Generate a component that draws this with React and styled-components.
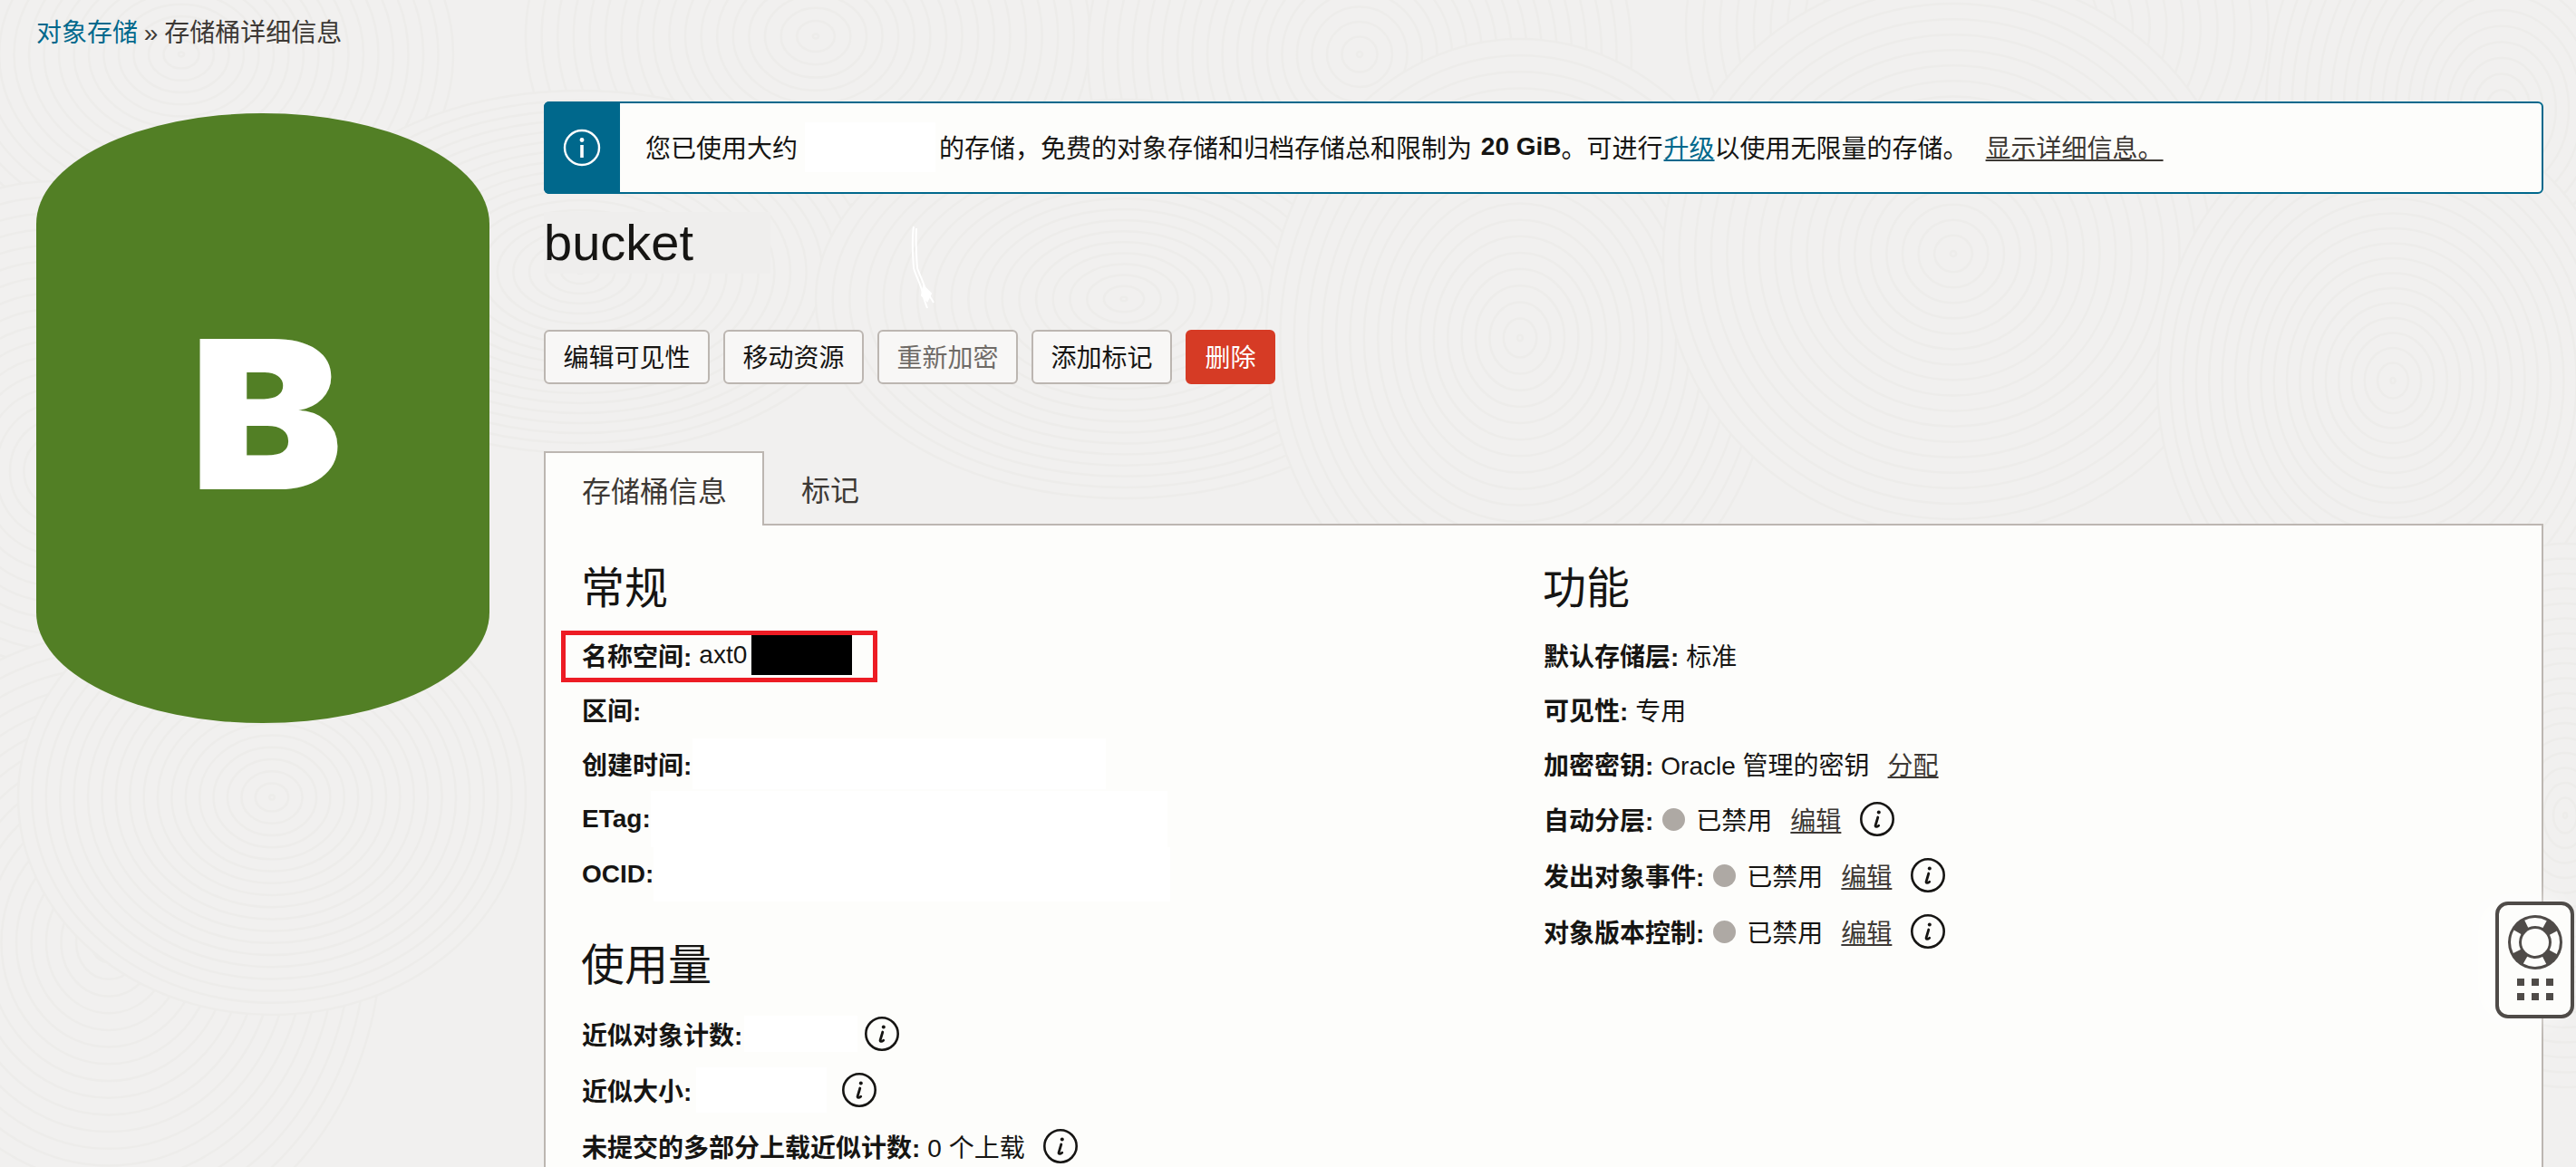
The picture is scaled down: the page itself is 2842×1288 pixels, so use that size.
import React from 'react';
import styled, { createGlobalStyle } from 'styled-components';

const GlobalStyle = createGlobalStyle`
  html, body {
    margin: 0;
    padding: 0;
    height: 1288px;
    overflow: hidden;
    background: #f1f0ef;
    font-family: "Liberation Sans", "Noto Sans CJK SC", sans-serif;
    color: #161513;
  }
`;

const Page = styled.div`
  position: relative;
  height: 1288px;
  overflow: hidden;
  padding: 0 36px 0 40px;
  box-sizing: border-box;
`;

const Backdrop = styled.svg`
  position: absolute;
  inset: 0;
`;

const Breadcrumb = styled.nav`
  position: relative;
  height: 74px;
  line-height: 74px;
  font-size: 28px;
  color: #3d3935;
  word-spacing: -1px;
`;

const Crumb = styled.a`
  color: #00688c;
`;

const Body = styled.div`
  position: relative;
  display: flex;
  gap: 60px;
`;

const Side = styled.div`
  flex: 0 0 500px;
  padding-top: 51px;
`;

const BucketShape = styled.div`
  width: 500px;
  height: 673px;
  background: #527f25;
  border-radius: 250px / 122px;
  display: flex;
  align-items: center;
  justify-content: center;
  padding-bottom: 9px;
  box-sizing: border-box;
`;

const BucketLetter = styled.span`
  margin-left: 6px;
  color: #fff;
  font-family: Inter, Roboto, "Liberation Sans", sans-serif;
  font-weight: 900;
  font-size: 226px;
  line-height: 1;
  -webkit-text-stroke: 2px #fff;
  transform: scaleX(1.107);
`;

const Main = styled.main`
  flex: 1;
  min-width: 0;
  padding-top: 38px;
`;

const Banner = styled.div`
  display: flex;
  height: 102px;
  box-sizing: border-box;
  border: 2px solid #00688c;
  border-radius: 6px;
  background: #fdfdfb;
  font-size: 28px;
`;

const BannerIcon = styled.div`
  flex: 0 0 84px;
  margin: -2px 0 -2px -2px;
  background: #00688c;
  border-radius: 6px 0 0 6px;
  display: flex;
  align-items: center;
  justify-content: center;
`;

const BannerText = styled.div`
  display: flex;
  align-items: center;
  padding: 0 0 2px 28px;
  white-space: pre;
`;

const BannerPatch = styled.span`
  display: inline-block;
  width: 144px;
  height: 55px;
  margin: 0 4px 0 8px;
  background: #fff;
`;

const Strong = styled.b`
  margin-left: 2px;
`;

const UpgradeLink = styled.a`
  margin-left: 1px;
  color: #00688c;
  text-decoration: underline;
`;

const DetailLink = styled.a`
  margin-left: 19px;
  color: #3d3935;
  text-decoration: underline;
`;

const TitleRow = styled.div`
  position: relative;
  margin-top: 20px;
  height: 68px;
`;

const Title = styled.h1`
  margin: 0;
  width: 250px;
  font-size: 56px;
  font-weight: 400;
  line-height: 68px;
  background: #efeeed;
`;

const Squiggle = styled.svg`
  position: absolute;
  left: 405px;
  top: 14px;
`;

const Toolbar = styled.div`
  display: flex;
  gap: 15px;
  margin-top: 62px;
`;

const Button = styled.button`
  height: 60px;
  padding: 0 19.5px 2px;
  border: 2px solid ${(p) => (p.$danger ? '#d63b25' : '#bcb6b1')};
  border-radius: 6px;
  background: ${(p) => (p.$danger ? '#d63b25' : '#f8f7f6')};
  color: ${(p) => (p.$danger ? '#fff' : p.disabled ? '#6f6b67' : '#161513')};
  font: inherit;
  font-size: 28px;
`;

const Tabs = styled.div`
  display: flex;
  margin-top: 74px;
  position: relative;
  z-index: 1;
  margin-bottom: -2px;
`;

const Tab = styled.div`
  width: 243px;
  height: 82px;
  box-sizing: border-box;
  font-size: 32px;
  color: #3d3935;
  display: flex;
  align-items: center;
  padding-left: ${(p) => (p.$active ? '40px' : '41px')};
  background: ${(p) => (p.$active ? '#fdfdfb' : 'transparent')};
  border: ${(p) => (p.$active ? '2px solid #bcb6b1' : 'none')};
  border-bottom: none;
`;

const Panel = styled.section`
  display: grid;
  grid-template-columns: 1061px 1fr;
  height: 760px;
  box-sizing: border-box;
  padding: 40px 0 0 40px;
  border: 2px solid #bcb6b1;
  background: #fdfdfb;
`;

const Heading = styled.h2`
  font-size: 48px;
  font-weight: 400;
  line-height: 60px;
  margin: ${(p) => (p.$second ? '41px 0 14px' : '0 0 13px')};
  margin-left: -1px;
`;

const Row = styled.div`
  position: relative;
  display: flex;
  align-items: center;
  height: ${(p) => (p.$tall ? '62px' : '60px')};
  font-size: 28px;
  white-space: nowrap;
`;

const Label = styled.b`
  font-weight: 700;
`;

const Value = styled.span`
  margin-left: 8px;
`;

const Patch = styled.span`
  display: block;
  height: ${(p) => p.$h || 56}px;
  width: ${(p) => p.$w}px;
  background: #fff;
  margin-left: ${(p) => p.$left || 0}px;
`;

const Censor = styled.span`
  display: block;
  width: 111px;
  height: 44px;
  margin-left: 5px;
  background: #000;
`;

const Callout = styled.div`
  position: absolute;
  left: -23px;
  top: 3px;
  width: 349px;
  height: 57px;
  box-sizing: border-box;
  border: 5px solid #ed1c24;
`;

const Dot = styled.span`
  width: 25px;
  height: 25px;
  margin: 0 12px 0 10px;
  border-radius: 50%;
  background: #aea9a4;
`;

const EditLink = styled.a`
  margin-left: 20px;
  color: #3d3935;
  text-decoration: underline;
`;

const HintIcon = styled.svg`
  flex: none;
  margin-left: ${(p) => p.$gap || 21}px;
`;

const HelpWidget = styled.aside`
  position: absolute;
  left: 2753px;
  top: 995px;
  width: 87px;
  height: 129px;
  box-sizing: border-box;
  border: 4px solid #4f4b48;
  border-radius: 14px;
  background: #fdfdfb;
  box-shadow: -18px 0 30px rgba(255, 255, 255, 0.7);
  display: flex;
  flex-direction: column;
  align-items: center;
  padding-top: 10px;
`;

const Dots = styled.div`
  display: grid;
  grid-template-columns: repeat(3, 8px);
  gap: 8px;
  margin-top: 9px;
  span {
    height: 8px;
    background: #4f4b48;
  }
`;

// wood grain behind the page, later groups paint over earlier ones
const grain = [
  [200, 60, 300, 240], [900, 40, 320, 260], [1500, 60, 300, 300], [2200, 30, 340, 280], [2760, 120, 260, 320],
  [60, 520, 280, 320], [640, 300, 320, 200], [1240, 330, 340, 220], [1677, 373, 280, 330], [2155, 280, 320, 310],
  [2640, 420, 260, 300], [120, 1040, 300, 340], [300, 880, 280, 240], [2830, 900, 200, 300],
];

function Grain() {
  return (
    <Backdrop width="2842" height="1288" viewBox="0 0 2842 1288" fill="none">
      {grain.map(([cx, cy, rx, ry]) => {
        const rings = [];
        for (let i = 0; i < 1; i += 0.055) {
          rings.push(<ellipse key={i} cx={cx} cy={cy} rx={rx * (1 - i)} ry={ry * (1 - i)} stroke="#edecea" strokeWidth="2.5" />);
        }
        return (
          <g key={cx + '-' + cy}>
            <ellipse cx={cx} cy={cy} rx={rx} ry={ry} fill="#f1f0ef" />
            {rings}
          </g>
        );
      })}
    </Backdrop>
  );
}

function Hint({ gap }) {
  return (
    <HintIcon $gap={gap} width="38" height="38" viewBox="0 0 38 38" fill="none" stroke="#161513">
      <circle cx="19" cy="19" r="17.7" strokeWidth="2.6" />
      <circle cx="20.8" cy="11.6" r="2" fill="#161513" stroke="none" />
      <path d="M19.8 17l-2.7 9c-.4 1.7 1.5 2 3.6.2" strokeWidth="2.8" strokeLinecap="round" />
    </HintIcon>
  );
}

function Toggle({ label }) {
  return (
    <Row $tall>
      <Label>{label}:</Label>
      <Dot />
      <span>已禁用</span>
      <EditLink>编辑</EditLink>
      <Hint />
    </Row>
  );
}

export default function App() {
  return (
    <Page>
      <GlobalStyle />
      <Grain />
      <Breadcrumb>
        <Crumb>对象存储</Crumb> » 存储桶详细信息
      </Breadcrumb>
      <Body>
        <Side>
          <BucketShape>
            <BucketLetter>B</BucketLetter>
          </BucketShape>
        </Side>
        <Main>
          <Banner>
            <BannerIcon>
              <svg width="42" height="42" viewBox="0 0 42 42" fill="none" stroke="#fff">
                <circle cx="21" cy="21" r="19" strokeWidth="2.4" />
                <circle cx="21" cy="12.5" r="2.4" fill="#fff" stroke="none" />
                <path d="M21 18v14" strokeWidth="3.6" />
              </svg>
            </BannerIcon>
            <BannerText>
              您已使用大约<BannerPatch />的存储，免费的对象存储和归档存储总和限制为 <Strong>20 GiB</Strong>。可进行<UpgradeLink>升级</UpgradeLink>以使用无限量的存储。<DetailLink>显示详细信息。</DetailLink>
            </BannerText>
          </Banner>
          <TitleRow>
            <Title>bucket</Title>
            <Squiggle width="30" height="96" viewBox="0 0 30 96" fill="none" stroke="#fff" strokeWidth="2">
              <path d="M3 2C1 14 2 34 3 48c3 10 8 18 10 28 1 6 3 10 5 16M6 4c-1 14 0 30 1 44 3 8 7 16 10 26 3 4 6 8 8 12" />
              <path d="M14 68l8 8-4 8-6-6z" fill="#fff" />
            </Squiggle>
          </TitleRow>
          <Toolbar>
            <Button>编辑可见性</Button>
            <Button>移动资源</Button>
            <Button disabled>重新加密</Button>
            <Button>添加标记</Button>
            <Button $danger>删除</Button>
          </Toolbar>
          <Tabs>
            <Tab $active>存储桶信息</Tab>
            <Tab>标记</Tab>
          </Tabs>
          <Panel>
            <div>
              <Heading>常规</Heading>
              <Row>
                <Label>名称空间:</Label>
                <Value>axt0</Value>
                <Censor />
                <Callout />
              </Row>
              <Row><Label>区间:</Label></Row>
              <Row><Label>创建时间:</Label><Patch $w={456} $left={1} /></Row>
              <Row $tall><Label>ETag:</Label><Patch $w={570} $h={62} /></Row>
              <Row><Label>OCID:</Label><Patch $w={570} $h={60} /></Row>
              <Heading $second>使用量</Heading>
              <Row $tall><Label>近似对象计数:</Label><Patch $w={125} $h={40} $left={2} /><Hint gap={8} /></Row>
              <Row $tall><Label>近似大小:</Label><Patch $w={144} $h={50} $left={5} /><Hint gap={17} /></Row>
              <Row $tall><Label>未提交的多部分上载近似计数:</Label><Value>0 个上载</Value><Hint gap={20} /></Row>
            </div>
            <div>
              <Heading>功能</Heading>
              <Row><Label>默认存储层:</Label><Value>标准</Value></Row>
              <Row><Label>可见性:</Label><Value>专用</Value></Row>
              <Row><Label>加密密钥:</Label><Value>Oracle 管理的密钥</Value><EditLink>分配</EditLink></Row>
              <Toggle label="自动分层" />
              <Toggle label="发出对象事件" />
              <Toggle label="对象版本控制" />
            </div>
          </Panel>
        </Main>
      </Body>
      <HelpWidget>
        <svg width="62" height="62" viewBox="0 0 62 62">
          <circle cx="31" cy="31" r="30" fill="#4f4b48" />
          <circle cx="31" cy="31" r="22.5" fill="none" stroke="#fdfdfb" strokeWidth="9" strokeDasharray="22 13.34" strokeDashoffset="11" transform="rotate(-90 31 31)" />
          <circle cx="31" cy="31" r="15" fill="#fdfdfb" />
        </svg>
        <Dots>
          <span /><span /><span /><span /><span /><span />
        </Dots>
      </HelpWidget>
    </Page>
  );
}
